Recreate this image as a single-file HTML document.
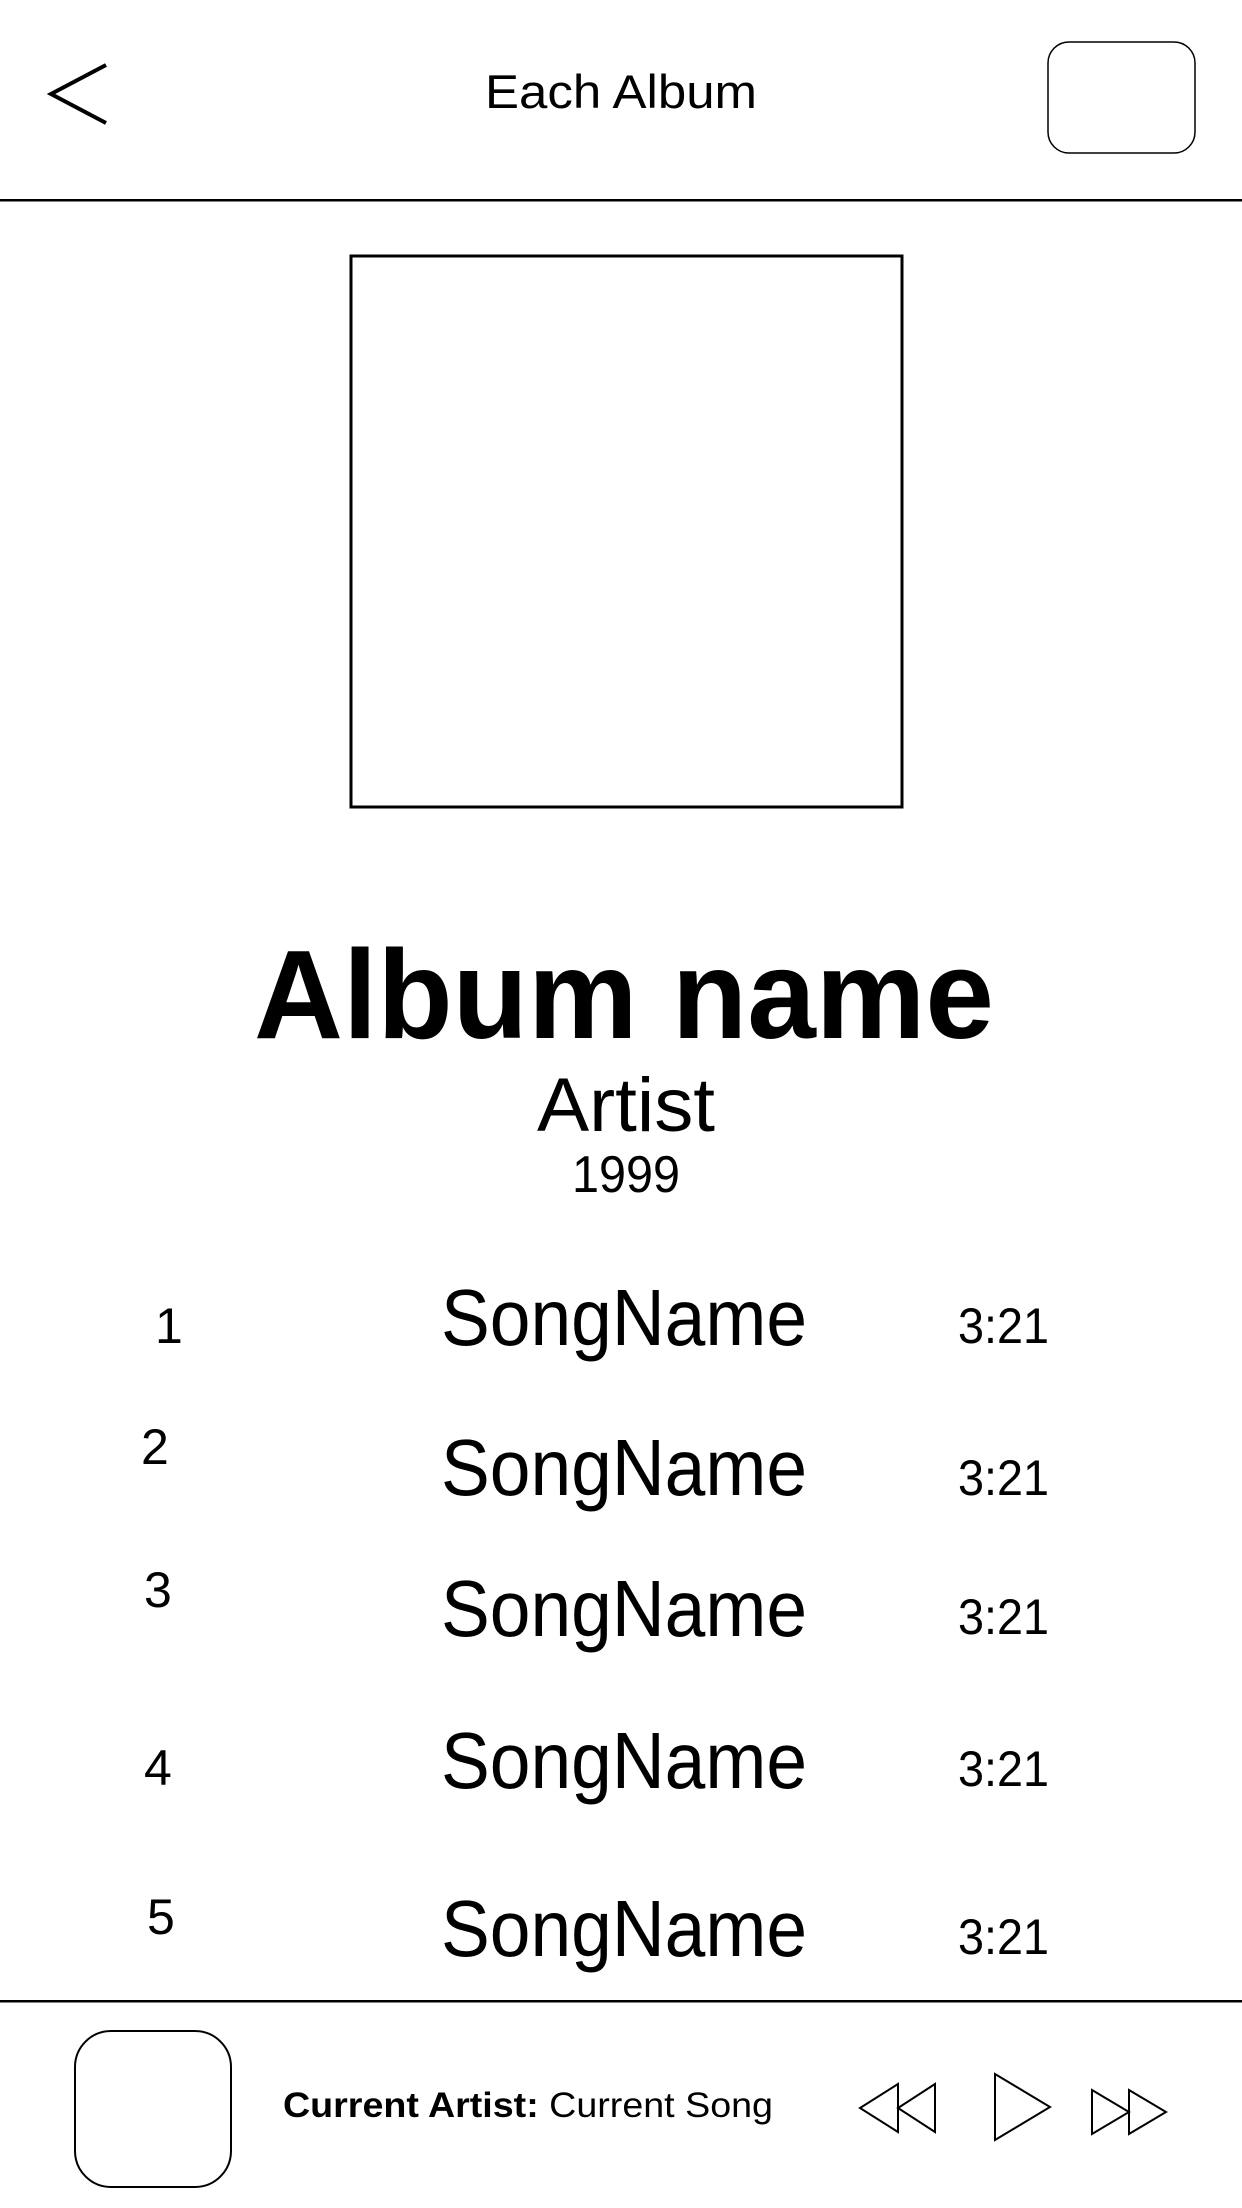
<!DOCTYPE html>
<html><head><meta charset="utf-8"><style>
html,body{margin:0;padding:0;background:#fff;width:1242px;height:2208px;overflow:hidden}
svg{display:block}
text{font-family:"Liberation Sans",sans-serif;fill:#000}
</style></head><body>
<svg width="1242" height="2208" viewBox="0 0 1242 2208" xmlns="http://www.w3.org/2000/svg">
<path d="M106 65 L51 94 L106 123" fill="none" stroke="#000" stroke-width="4"/>
<text x="621" y="108" font-size="47" text-anchor="middle" textLength="272" lengthAdjust="spacingAndGlyphs">Each Album</text>
<rect x="1048" y="42" width="147" height="111" rx="21" fill="none" stroke="#000" stroke-width="1.5"/>
<rect x="0" y="199" width="1242" height="2.5" fill="#000"/>
<rect x="351" y="256" width="551" height="551" fill="none" stroke="#000" stroke-width="3"/>
<text x="624" y="1038" font-size="126" font-weight="bold" text-anchor="middle" textLength="740" lengthAdjust="spacingAndGlyphs">Album name</text>
<text x="626" y="1131" font-size="76" text-anchor="middle" textLength="178" lengthAdjust="spacingAndGlyphs">Artist</text>
<text x="626" y="1192" font-size="52" text-anchor="middle" textLength="108" lengthAdjust="spacingAndGlyphs">1999</text>
<g font-size="80">
<text x="624" y="1345" text-anchor="middle" textLength="366" lengthAdjust="spacingAndGlyphs">SongName</text>
<text x="624" y="1495" text-anchor="middle" textLength="366" lengthAdjust="spacingAndGlyphs">SongName</text>
<text x="624" y="1636" text-anchor="middle" textLength="366" lengthAdjust="spacingAndGlyphs">SongName</text>
<text x="624" y="1788" text-anchor="middle" textLength="366" lengthAdjust="spacingAndGlyphs">SongName</text>
<text x="624" y="1956" text-anchor="middle" textLength="366" lengthAdjust="spacingAndGlyphs">SongName</text>
</g>
<g font-size="50">
<text x="155" y="1343">1</text>
<text x="141" y="1464">2</text>
<text x="144" y="1607">3</text>
<text x="144" y="1785">4</text>
<text x="147" y="1934">5</text>
<text x="958" y="1343" textLength="91" lengthAdjust="spacingAndGlyphs">3:21</text>
<text x="958" y="1495" textLength="91" lengthAdjust="spacingAndGlyphs">3:21</text>
<text x="958" y="1634" textLength="91" lengthAdjust="spacingAndGlyphs">3:21</text>
<text x="958" y="1786" textLength="91" lengthAdjust="spacingAndGlyphs">3:21</text>
<text x="958" y="1954" textLength="91" lengthAdjust="spacingAndGlyphs">3:21</text>
</g>
<rect x="0" y="2000" width="1242" height="2.5" fill="#000"/>
<rect x="75" y="2031" width="156" height="156" rx="36" fill="none" stroke="#000" stroke-width="2"/>
<text x="283" y="2117" font-size="35" textLength="490" lengthAdjust="spacingAndGlyphs"><tspan font-weight="bold">Current Artist:</tspan> Current Song</text>
<g fill="none" stroke="#000" stroke-width="2">
<path d="M898 2084 L860 2108 L898 2132 Z"/>
<path d="M935 2084 L898 2108 L935 2132 Z"/>
<path d="M995 2074 L1050 2107 L995 2140 Z"/>
<path d="M1092 2090 L1129 2112 L1092 2134 Z"/>
<path d="M1129 2090 L1166 2112 L1129 2134 Z"/>
</g>
</svg>
</body></html>
